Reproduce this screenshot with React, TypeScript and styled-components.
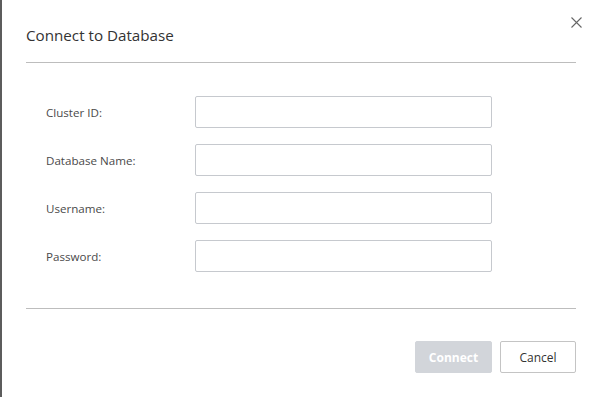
import React from "react";
import styled, { createGlobalStyle } from "styled-components";

const GlobalStyle = createGlobalStyle`
  html, body { margin: 0; padding: 0; background: #ffffff; }
  body { font-family: "Open Sans", "Noto Sans", sans-serif; }
  * { box-sizing: border-box; }
`;

const Dialog = styled.div`
  width: 599px;
  height: 397px;
  background: #ffffff;
  border-left: 2px solid #5c5c5c;
  display: flex;
  flex-direction: column;
`;

const Header = styled.div`
  display: flex;
  justify-content: space-between;
  align-items: flex-start;
  height: 62px;
  padding: 0 17px 0 24px;
`;

const Title = styled.h2`
  margin: 25px 0 0;
  font-size: 15.2px;
  line-height: 20px;
  font-weight: 400;
  color: #333333;
`;

const CloseButton = styled.button`
  margin-top: 17px;
  width: 11px;
  height: 11px;
  padding: 0;
  border: none;
  background: none;
  display: flex;
  cursor: pointer;
`;

const Divider = styled.div`
  height: 1px;
  margin: 0 23px 0 24px;
  background: #bdbdbd;
`;

const Form = styled.div`
  display: flex;
  flex-direction: column;
  gap: 16px;
  padding: 33px 0 36px 44px;
`;

const Row = styled.div`
  display: grid;
  grid-template-columns: 149px 297px;
  align-items: center;
`;

const Label = styled.label`
  font-size: 11.6px;
  color: #4a4a4a;
`;

const Input = styled.input`
  height: 32px;
  width: 297px;
  border: 1px solid #c6c9ce;
  border-radius: 2px;
  background: #ffffff;
  outline: none;
`;

const Footer = styled.div`
  display: flex;
  justify-content: flex-end;
  gap: 8px;
  padding: 32px 23px 0 0;
`;

const Button = styled.button<{ $primary?: boolean }>`
  height: 32px;
  width: ${(p) => (p.$primary ? "77px" : "76px")};
  border-radius: 2px;
  font-family: "Open Sans", "Noto Sans", sans-serif;
  font-size: 12px;
  font-weight: ${(p) => (p.$primary ? 700 : 400)};
  color: ${(p) => (p.$primary ? "#ffffff" : "#333333")};
  background: ${(p) => (p.$primary ? "#d2d5da" : "#ffffff")};
  border: 1px solid ${(p) => (p.$primary ? "#d2d5da" : "#c4c4c4")};
  padding: 0;
`;

const fields = ["Cluster ID:", "Database Name:", "Username:", "Password:"];

export default function App() {
  return (
    <>
      <GlobalStyle />
      <Dialog>
        <Header>
          <Title>Connect to Database</Title>
          <CloseButton aria-label="Close">
            <svg width="11" height="11" viewBox="0 0 11 11">
              <path d="M0.5 0.5 L10.5 10.5 M10.5 0.5 L0.5 10.5" stroke="#666" strokeWidth="1.1" fill="none" />
            </svg>
          </CloseButton>
        </Header>
        <Divider />
        <Form>
          {fields.map((f) => (
            <Row key={f}>
              <Label>{f}</Label>
              <Input type={f === "Password:" ? "password" : "text"} />
            </Row>
          ))}
        </Form>
        <Divider />
        <Footer>
          <Button $primary disabled>Connect</Button>
          <Button>Cancel</Button>
        </Footer>
      </Dialog>
    </>
  );
}
